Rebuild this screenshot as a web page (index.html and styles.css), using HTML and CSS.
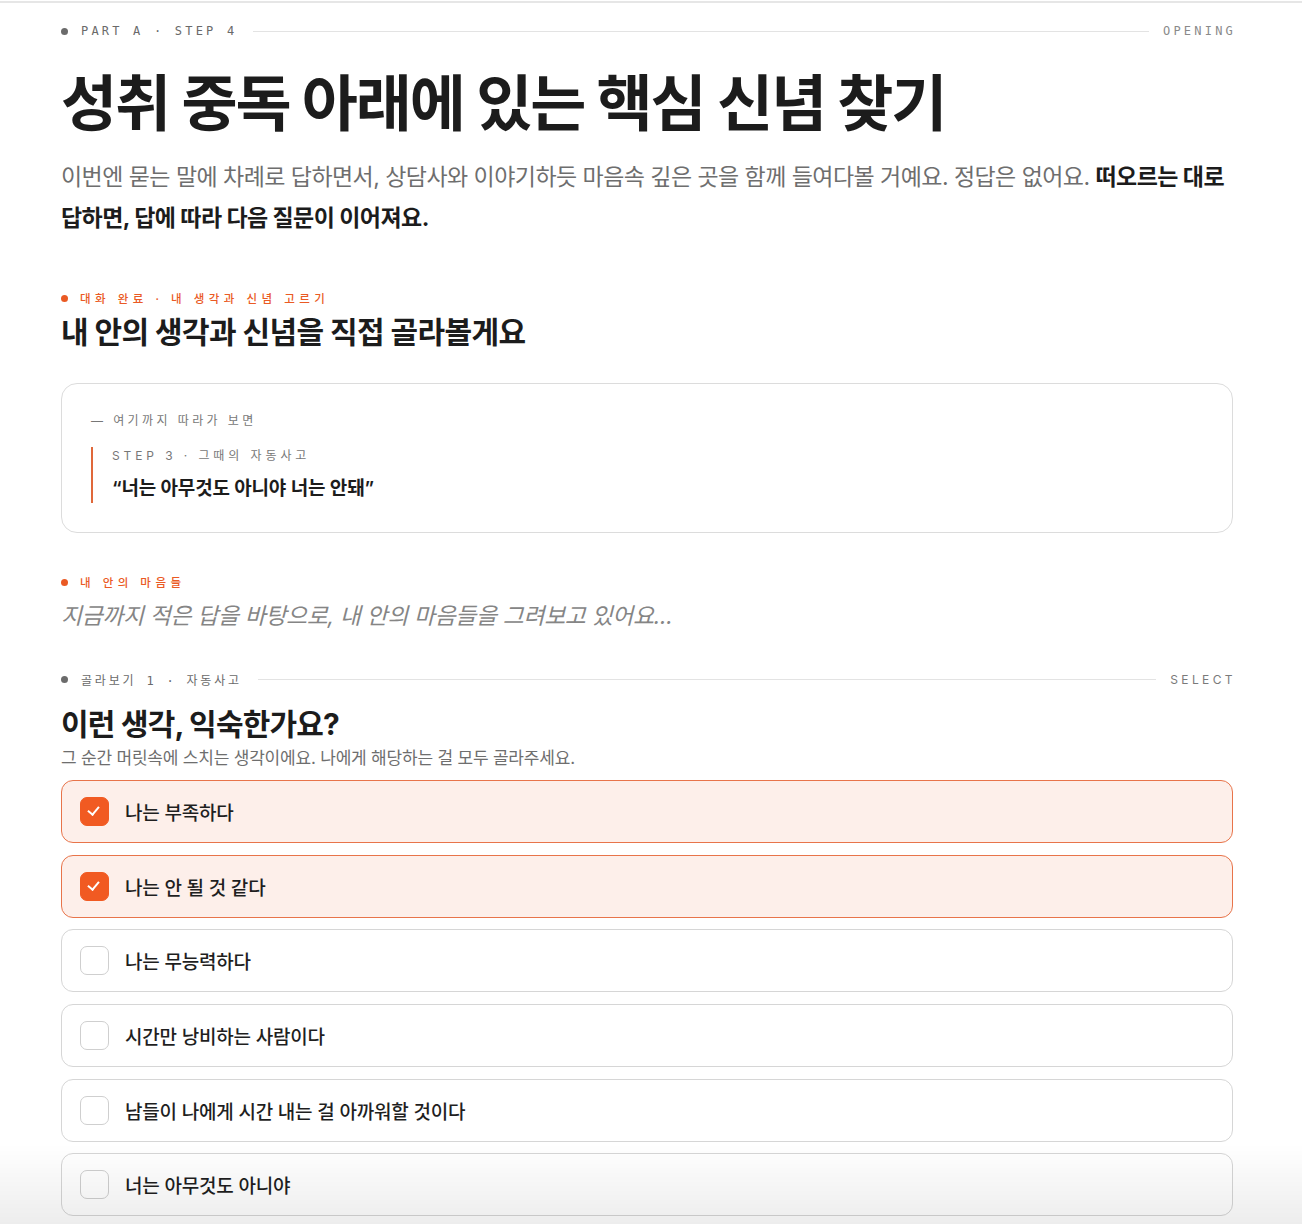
FILE: index.html
```html
<!DOCTYPE html>
<html lang="ko">
<head>
    <meta charset="UTF-8">
    <meta name="viewport" content="width=device-width, initial-scale=1.0">
    <title>Part A - Step 4</title>
    <link rel="stylesheet" href="styles.css">
</head>
<body>

    <div class="page">

        <div class="step-bar">
            <span class="dot"></span>
            <span class="step-label">PART A · STEP 4</span>
            <span class="rule"></span>
            <span class="step-tag">OPENING</span>
        </div>

        <h1 class="title">성취 중독 아래에 있는 핵심 신념 찾기</h1>
        <p class="intro">이번엔 묻는 말에 차례로 답하면서, 상담사와 이야기하듯 마음속 깊은 곳을 함께 들여다볼 거예요. 정답은 없어요. <strong>떠오르는 대로 답하면, 답에 따라 다음 질문이 이어져요.</strong></p>

        <div class="section">
            <div class="kicker"><span class="dot orange"></span>대화 완료 · 내 생각과 신념 고르기</div>
            <h2 class="section-title">내 안의 생각과 신념을 직접 골라볼게요</h2>
        </div>

        <div class="recap">
            <div class="recap-label">— 여기까지 따라가 보면</div>
            <div class="recap-quote">
                <div class="recap-step">STEP 3 · 그때의 자동사고</div>
                <div class="recap-text">“너는 아무것도 아니야 너는 안돼”</div>
            </div>
        </div>

        <div class="thinking">
            <div class="kicker"><span class="dot orange"></span>내 안의 마음들</div>
            <p class="thinking-text">지금까지 적은 답을 바탕으로, 내 안의 마음들을 그려보고 있어요...</p>
        </div>

        <div class="step-bar small">
            <span class="dot"></span>
            <span class="step-label">골라보기 1 · 자동사고</span>
            <span class="rule"></span>
            <span class="step-tag">SELECT</span>
        </div>

        <h2 class="question">이런 생각, 익숙한가요?</h2>
        <p class="question-sub">그 순간 머릿속에 스치는 생각이에요. 나에게 해당하는 걸 모두 골라주세요.</p>

        <div class="options">
            <button class="option checked"><span class="check"></span>나는 부족하다</button>
            <button class="option checked"><span class="check"></span>나는 안 될 것 같다</button>
            <button class="option"><span class="check"></span>나는 무능력하다</button>
            <button class="option"><span class="check"></span>시간만 낭비하는 사람이다</button>
            <button class="option"><span class="check"></span>남들이 나에게 시간 내는 걸 아까워할 것이다</button>
            <button class="option"><span class="check"></span>너는 아무것도 아니야</button>
        </div>

    </div>

    <div class="bottom-fade"></div>

    <script>
        document.querySelectorAll('.option').forEach((opt) => {
            opt.addEventListener('click', function () {
                opt.classList.toggle('checked');
            });
        });
    </script>

</body>
</html>
```

FILE: styles.css
```css
body {
    margin: 0;
    background: #ffffff;
    color: #1c1c1c;
    font-family: "Inter", "Noto Sans CJK KR", sans-serif;
    border-top: 2px solid #e6e6e6;
    margin-top: 1px;
}

.page {
    width: 1172px;
    margin-left: 61px;
    padding-top: 18px;
    padding-bottom: 80px;
}

.dot {
    display: inline-block;
    width: 7px;
    height: 7px;
    border-radius: 50%;
    background: #6b6b6b;
    flex-shrink: 0;
}

.dot.orange {
    background: #ea5a24;
    margin-right: 12px;
}

.step-bar {
    display: flex;
    align-items: center;
    height: 20px;
    font-family: "DejaVu Sans Mono", "Noto Sans CJK KR", monospace;
    font-size: 12px;
    letter-spacing: 3.2px;
    color: #6a6a6a;
}

.step-bar .dot {
    margin: 0 13px 0 0;
}

.step-label {
    white-space: nowrap;
}

.rule {
    flex: 1;
    height: 1px;
    background: #e3e3e3;
    margin: 0 14px 0 16px;
}

.step-tag {
    color: #8a8a8a;
    margin-right: -3px;
}

.title {
    margin: 24px 0 0;
    font-size: 61px;
    font-weight: 700;
    letter-spacing: -2.1px;
    line-height: 78px;
    color: #1c1c1c;
}

.intro {
    margin: 14px 0 0;
    font-size: 23px;
    line-height: 41px;
    color: #6e6e6e;
    letter-spacing: -0.55px;
    word-break: keep-all;
}

.intro strong {
    color: #1c1c1c;
    font-weight: 700;
}

.section {
    margin-top: 50px;
}

.kicker {
    display: flex;
    align-items: center;
    height: 18px;
    font-size: 11.5px;
    letter-spacing: 4.5px;
    color: #ea5a24;
    font-weight: 500;
}

.section-title {
    margin: 5px 0 0;
    font-size: 30px;
    line-height: 40px;
    font-weight: 700;
    letter-spacing: -0.6px;
}

.recap {
    margin-top: 31px;
    border: 1px solid #dcdcdc;
    border-radius: 16px;
    padding: 28px 29px 29px;
}

.recap-label {
    font-size: 12px;
    letter-spacing: 3.4px;
    color: #777;
    line-height: 18px;
}

.recap-quote {
    margin-top: 17px;
    border-left: 2px solid #e0683a;
    padding: 0 0 0 19px;
}

.recap-step {
    font-size: 12px;
    letter-spacing: 3.9px;
    color: #777;
    line-height: 18px;
}

.recap-text {
    margin-top: 10px;
    font-size: 19px;
    font-weight: 600;
    line-height: 28px;
    letter-spacing: -0.2px;
    color: #1c1c1c;
}

.thinking {
    margin-top: 40px;
}

.thinking-text {
    margin: 8px 0 0;
    font-size: 22.8px;
    line-height: 34px;
    font-style: italic;
    color: #858585;
    letter-spacing: -0.3px;
}

.step-bar.small {
    margin-top: 36px;
}

.step-bar.small .step-label {
    letter-spacing: 2.8px;
}

.step-bar.small .step-tag {
    font-family: "Inter", sans-serif;
    letter-spacing: 3.4px;
    color: #7a7a7a;
}

.question {
    margin: 14px 0 0;
    font-size: 30px;
    line-height: 42px;
    font-weight: 700;
    letter-spacing: -0.8px;
}

.question-sub {
    margin: 0;
    font-size: 17px;
    line-height: 26px;
    color: #6e6e6e;
    letter-spacing: -0.2px;
}

.options {
    display: flex;
    flex-direction: column;
    gap: 11.7px;
    margin-top: 9px;
}

.option {
    display: flex;
    align-items: center;
    height: 63px;
    padding: 0 18px;
    background: #fff;
    border: 1px solid #d6d6d6;
    border-radius: 12px;
    font-family: "Inter", "Noto Sans CJK KR", sans-serif;
    font-size: 19px;
    font-weight: 500;
    color: #1f1f1f;
    text-align: left;
    letter-spacing: -0.2px;
    cursor: pointer;
}

.check {
    width: 27px;
    height: 27px;
    margin-right: 16px;
    border: 1.5px solid #cfcfcf;
    border-radius: 7px;
    background: #fff;
    flex-shrink: 0;
    position: relative;
}

.option.checked {
    background: #fdefea;
    border-color: #e8744a;
}

.option.checked .check {
    background: #f15a22;
    border-color: #f15a22;
}

.option.checked .check::after {
    content: "";
    position: absolute;
    left: 9px;
    top: 6px;
    width: 5px;
    height: 9px;
    border-right: 2.4px solid #fff;
    border-bottom: 2.4px solid #fff;
    transform: rotate(40deg);
}

.bottom-fade {
    position: fixed;
    left: 0;
    right: 0;
    bottom: 0;
    height: 80px;
    background: linear-gradient(to bottom, rgba(0, 0, 0, 0), rgba(0, 0, 0, 0.07));
    pointer-events: none;
}
```
